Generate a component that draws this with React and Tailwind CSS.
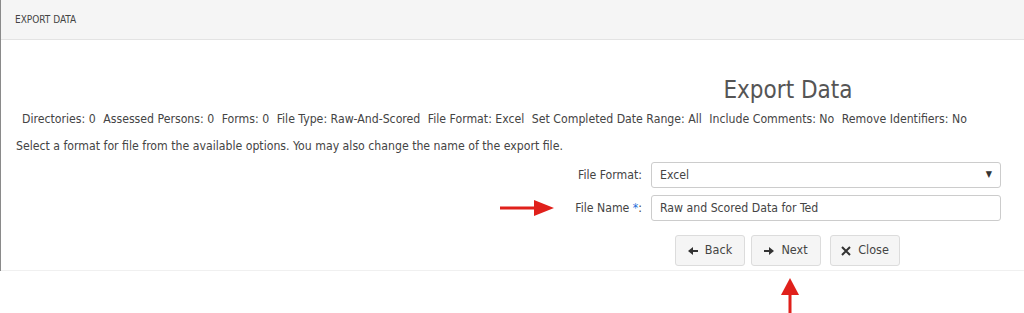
import React from 'react';

const font = { fontFamily: '"DejaVu Sans Condensed", "DejaVu Sans", Tahoma, sans-serif' };

function ArrowRight() {
    return (
        <svg width="54" height="16" viewBox="0 0 54 16" className="block">
            <rect x="0" y="6.5" width="36" height="3" fill="#e0201b" />
            <polygon points="34,0 54,8 34,16" fill="#e0201b" />
        </svg>
    );
}

function ArrowUp() {
    return (
        <svg width="18" height="36" viewBox="0 0 18 36" className="block">
            <polygon points="9,0 18,17 0,17" fill="#e0201b" />
            <rect x="7.5" y="15" width="3" height="21" fill="#e0201b" />
        </svg>
    );
}

function SmallArrow({ dir }) {
    return (
        <svg width="10" height="8" viewBox="0 0 10 8" className="block" style={{ transform: dir === 'left' ? 'scaleX(-1)' : 'none' }}>
            <rect x="0" y="3" width="6" height="2" fill="#333" />
            <polygon points="5,0 10,4 5,8" fill="#333" />
        </svg>
    );
}

function CloseIcon() {
    return (
        <svg width="10" height="10" viewBox="0 0 10 10" className="block">
            <path d="M1 1 L9 9 M9 1 L1 9" stroke="#333" strokeWidth="2" />
        </svg>
    );
}

function Btn({ icon, children, w }) {
    return (
        <button className={`h-[31px] ${w} flex items-center justify-center gap-[7px] bg-[#f5f5f5] border border-[#dcdcdc] rounded-[3px] text-[12.5px] text-[#444]`}>
            {icon}
            <span>{children}</span>
        </button>
    );
}

export default function App() {
    const info = [
        ['Directories', '0'], ['Assessed Persons', '0'], ['Forms', '0'], ['File Type', 'Raw-And-Scored'],
        ['File Format', 'Excel'], ['Set Completed Date Range', 'All'], ['Include Comments', 'No'], ['Remove Identifiers', 'No'],
    ];

    return (
        <div className="w-[1024px] h-[313px] bg-white text-[#444] overflow-hidden" style={font}>
            <div className="border-l border-[#8a8a8a]">
                <div className="h-[40px] bg-[#f5f5f5] border-b border-[#e3e3e3] flex items-center pl-[14px] text-[10px] text-[#444]">
                    EXPORT DATA
                </div>
                <div className="h-[231px] bg-white border-b border-[#f0f0f0] pt-[36px]">
                    <div className="flex">
                        <div className="flex-1" />
                        <div className="w-[432px] mr-[20px] text-center text-[24px] text-[#555] leading-[28px]">Export Data</div>
                    </div>
                    <div className="flex gap-[7.5px] pl-[21px] mt-[6px] text-[12.2px] leading-[18px]">
                        {info.map(([k, v]) => <span key={k}>{k}: {v}</span>)}
                    </div>
                    <div className="pl-[15px] mt-[9px] text-[12.2px] leading-[18px]">
                        Select a format for file from the available options. You may also change the name of the export file.
                    </div>
                    <div className="flex items-center mt-[7px] h-[26px]">
                        <div className="w-[567px]" />
                        <div className="w-[83px] text-right text-[12.2px] pr-[9px]">File Format:</div>
                        <div className="w-[350px] h-[26px] border border-[#ccc] rounded-[3px] flex items-center justify-between px-[8px] text-[12.2px]">
                            <span>Excel</span>
                            <span className="text-[9px] text-[#333]">▼</span>
                        </div>
                    </div>
                    <div className="flex items-center mt-[7px] h-[26px]">
                        <div className="w-[499px]" />
                        <ArrowRight />
                        <div className="w-[97px] text-right text-[12.2px] pr-[9px]">File Name <span className="text-[#1e6fd9]">*</span>:</div>
                        <div className="w-[350px] h-[26px] border border-[#ccc] rounded-[3px] flex items-center px-[8px] text-[12.2px]">
                            Raw and Scored Data for Ted
                        </div>
                    </div>
                    <div className="flex mt-[14px] pl-[674px]">
                        <Btn w="w-[70px]" icon={<SmallArrow dir="left" />}>Back</Btn>
                        <div className="w-[6px]" />
                        <Btn w="w-[70px]" icon={<SmallArrow dir="right" />}>Next</Btn>
                        <div className="w-[9px]" />
                        <Btn w="w-[70px]" icon={<CloseIcon />}>Close</Btn>
                    </div>
                </div>
            </div>
            <div className="pl-[781px] pt-[7px]">
                <ArrowUp />
            </div>
        </div>
    );
}
